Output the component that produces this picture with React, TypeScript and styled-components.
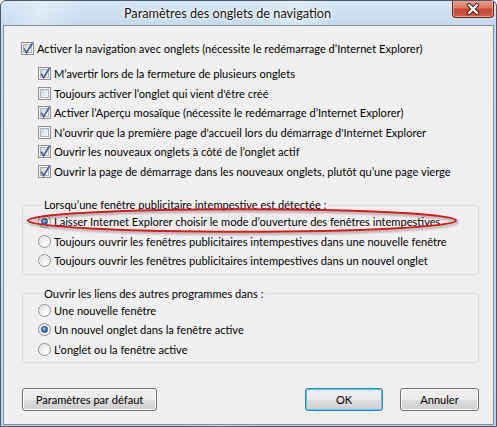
import React from 'react';
import styled, { createGlobalStyle } from 'styled-components';

const GlobalStyle = createGlobalStyle`
  html, body { margin: 0; padding: 0; background: #ffffff; }
  body { font-family: "Lato", "Noto Sans", sans-serif; font-size: 11.1px; color: #000; }
  * { box-sizing: border-box; }
`;

const Window = styled.div`
  width: 497px;
  height: 427px;
  border: 1px solid #4a5868;
  border-radius: 6px 6px 0 0;
  background:
    linear-gradient(100deg, rgba(255,255,255,0) 0px, rgba(255,255,255,0.35) 40px, rgba(255,255,255,0) 80px, rgba(255,255,255,0) 250px, rgba(255,255,255,0.3) 290px, rgba(255,255,255,0) 330px),
    linear-gradient(180deg, #d6e6f4 0px, #c5daee 24px, #bcd3ea 100%);
  padding: 0 2px 1px 2px;
  display: flex;
  flex-direction: column;
  overflow: hidden;
`;

const TitleBar = styled.div`
  height: 24px;
  display: flex;
  align-items: center;
  flex: none;
`;

const Title = styled.div`
  flex: 1;
  text-align: center;
  font-size: 12.7px;
  color: #111;
  text-shadow: 0 0 6px #ffffff, 0 0 3px #ffffff, 0 0 2px #ffffff;
`;

const CloseButton = styled.div`
  width: 42px;
  height: 18px;
  align-self: flex-start;
  margin-top: -1px;
  border: 1px solid #5b2420;
  border-top: none;
  border-radius: 0 0 4px 4px;
  background: linear-gradient(180deg, #eaa796 0%, #dc7863 45%, #c8452e 55%, #d35f46 100%);
  box-shadow: inset 0 0 0 1px rgba(255, 210, 200, 0.55);
  display: flex;
  align-items: center;
  justify-content: center;
`;

const Client = styled.div`
  flex: 1;
  background: #f0f0f0;
  border: 1px solid #7e8e9f;
  display: flex;
  flex-direction: column;
  padding: 12px 14px 13px 17px;
`;

const Row = styled.label<{ $h?: number }>`
  display: flex;
  align-items: center;
  gap: 3px;
  height: ${(p) => p.$h ?? 20}px;
  position: relative;
  white-space: nowrap;
`;

const SubList = styled.div`
  display: flex;
  flex-direction: column;
  margin: 6px 0 0 17px;
`;

const Box = styled.span`
  width: 13px;
  height: 13px;
  flex: none;
  border: 1px solid #8f8f8f;
  background: #f4f4f4;
  padding: 1px;
  display: flex;
`;

const BoxInner = styled.span`
  flex: 1;
  border: 1px solid #b0b4ba;
  background: linear-gradient(135deg, #d0d3d8 0%, #eef0f2 70%, #f8f8f8 100%);
  position: relative;
`;

const CheckMark = styled.svg`
  position: absolute;
  left: -2px;
  top: -3px;
`;

const Radio = styled.span`
  width: 13px;
  height: 13px;
  flex: none;
  border-radius: 50%;
  border: 1px solid #8c8e92;
  background: radial-gradient(circle at 65% 70%, #ffffff 0%, #eceef0 45%, #c9cdd2 100%);
  box-shadow: inset 0 0 0 1px rgba(255,255,255,0.7);
  display: flex;
  align-items: center;
  justify-content: center;
`;

const Dot = styled.span`
  width: 7px;
  height: 7px;
  border-radius: 50%;
  background: radial-gradient(circle at 40% 35%, #a8d8ff 0%, #3c86d0 45%, #123f83 100%);
  border: 1px solid #1d3f70;
`;

const Group = styled.fieldset<{ $top: number }>`
  margin: ${(p) => p.$top}px 0 0 1px;
  border: 1px solid #d5dfe5;
  border-radius: 3px;
  padding: 0 0 3px 15px;
  min-width: 0;
`;

const Legend = styled.legend`
  padding: 0 2px;
  margin-left: 4px;
  line-height: 14px;
`;

const RadioList = styled.div`
  display: flex;
  flex-direction: column;
`;

const Highlight = styled.svg`
  position: absolute;
  left: -12px;
  top: -4px;
  pointer-events: none;
`;

const ButtonRow = styled.div`
  margin-top: auto;
  margin-left: 1px;
  display: flex;
  gap: 17px;
`;

const Button = styled.div<{ $w: number; $default?: boolean }>`
  width: ${(p) => p.$w}px;
  height: 23px;
  border: 1px solid ${(p) => (p.$default ? '#3c7fb1' : '#707070')};
  border-radius: 3px;
  background: linear-gradient(180deg, #f2f2f2 0%, #ebebeb 50%, #dddddd 51%, #cfcfcf 100%);
  box-shadow: inset 0 0 0 1px ${(p) => (p.$default ? '#48d4f7' : '#fcfcfc')};
  display: flex;
  align-items: center;
  justify-content: center;
`;

const Spacer = styled.div`
  flex: 1;
`;

function Check({ checked }: { checked: boolean }) {
  return (
    <Box>
      <BoxInner>
        {checked && (
          <CheckMark width="12" height="13" viewBox="0 0 12 13">
            <path d="M2.2 6.8 L4.6 10.6 L10.4 1.2" fill="none" stroke="#4b5c94" strokeWidth="1.7" strokeLinejoin="miter" />
          </CheckMark>
        )}
      </BoxInner>
    </Box>
  );
}

function RadioBtn({ checked }: { checked: boolean }) {
  return <Radio>{checked && <Dot />}</Radio>;
}

const subItems: [boolean, string][] = [
  [true, 'M’avertir lors de la fermeture de plusieurs onglets'],
  [false, 'Toujours activer l’onglet qui vient d\'être créé'],
  [true, 'Activer l’Aperçu mosaïque (nécessite le redémarrage d’Internet Explorer)'],
  [false, 'N’ouvrir que la première page d\'accueil lors du démarrage d\'Internet Explorer'],
  [true, 'Ouvrir les nouveaux onglets à côté de l’onglet actif'],
  [true, 'Ouvrir la page de démarrage dans les nouveaux onglets, plutôt qu’une page vierge'],
];

const popupItems: [boolean, string][] = [
  [true, 'Laisser Internet Explorer choisir le mode d’ouverture des fenêtres intempestives'],
  [false, 'Toujours ouvrir les fenêtres publicitaires intempestives dans une nouvelle fenêtre'],
  [false, 'Toujours ouvrir les fenêtres publicitaires intempestives dans un nouvel onglet'],
];

const linkItems: [boolean, string][] = [
  [false, 'Une nouvelle fenêtre'],
  [true, 'Un nouvel onglet dans la fenêtre active'],
  [false, 'L’onglet ou la fenêtre active'],
];

export default function App() {
  return (
    <>
      <GlobalStyle />
      <Window>
        <TitleBar>
          <Title>Paramètres des onglets de navigation</Title>
          <CloseButton>
            <svg width="16" height="12" viewBox="0 0 16 12">
              <path d="M4 2 L12 10 M12 2 L4 10" stroke="#3a1a18" strokeWidth="4.2" strokeLinecap="round" />
              <path d="M4 2 L12 10 M12 2 L4 10" stroke="#ffffff" strokeWidth="2.4" strokeLinecap="round" />
            </svg>
          </CloseButton>
        </TitleBar>
        <Client>
          <Row>
            <Check checked />
            <span>Activer la navigation avec onglets (nécessite le redémarrage d’Internet Explorer)</span>
          </Row>
          <SubList>
            {subItems.map(([c, t]) => (
              <Row key={t} $h={19.5}>
                <Check checked={c} />
                <span>{t}</span>
              </Row>
            ))}
          </SubList>
          <Group $top={17}>
            <Legend>Lorsqu’une fenêtre publicitaire intempestive est détectée :</Legend>
            <RadioList>
              {popupItems.map(([c, t], i) => (
                <Row key={t} $h={19.5}>
                  {i === 0 && (
                    <Highlight width="434" height="28" viewBox="0 0 434 28">
                      <defs>
                        <filter id="blur" x="-5%" y="-50%" width="110%" height="200%">
                          <feGaussianBlur stdDeviation="1.2" />
                        </filter>
                      </defs>
                      <ellipse cx="217.5" cy="14.5" rx="214" ry="11.2" fill="none" stroke="rgba(0,0,0,0.35)" strokeWidth="2" filter="url(#blur)" />
                      <ellipse cx="216" cy="12.5" rx="214" ry="11.2" fill="none" stroke="#e0161a" strokeWidth="2" />
                    </Highlight>
                  )}
                  <RadioBtn checked={c} />
                  <span>{t}</span>
                </Row>
              ))}
            </RadioList>
          </Group>
          <Group $top={12}>
            <Legend>Ouvrir les liens des autres programmes dans :</Legend>
            <RadioList>
              {linkItems.map(([c, t]) => (
                <Row key={t} $h={19.5}>
                  <RadioBtn checked={c} />
                  <span>{t}</span>
                </Row>
              ))}
            </RadioList>
          </Group>
          <ButtonRow>
            <Button $w={135}>Paramètres par défaut</Button>
            <Spacer />
            <Button $w={78} $default>OK</Button>
            <Button $w={79}>Annuler</Button>
          </ButtonRow>
        </Client>
      </Window>
    </>
  );
}
